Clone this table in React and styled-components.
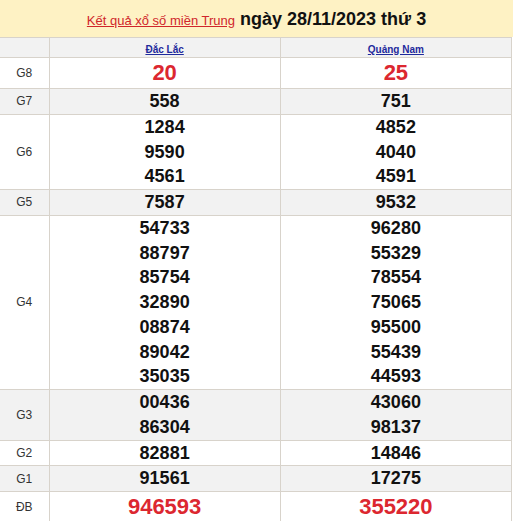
import React from "react";
import styled, { createGlobalStyle } from "styled-components";

const GlobalStyle = createGlobalStyle`
  body {
    margin: 0;
    background: #fff;
    font-family: "Liberation Sans", Arial, sans-serif;
  }
`;

const provinces = ["Đắc Lắc", "Quảng Nam"];

const prizes = [
  { label: "G8", big: true, values: [["20"], ["25"]] },
  { label: "G7", values: [["558"], ["751"]] },
  { label: "G6", values: [["1284", "9590", "4561"], ["4852", "4040", "4591"]] },
  { label: "G5", values: [["7587"], ["9532"]] },
  {
    label: "G4",
    values: [
      ["54733", "88797", "85754", "32890", "08874", "89042", "35035"],
      ["96280", "55329", "78554", "75065", "95500", "55439", "44593"],
    ],
  },
  { label: "G3", values: [["00436", "86304"], ["43060", "98137"]] },
  { label: "G2", values: [["82881"], ["14846"]] },
  { label: "G1", values: [["91561"], ["17275"]] },
  { label: "ĐB", big: true, values: [["946593"], ["355220"]] },
];

const ResultBox = () => {
  return (
    <Wrapper>
      <Title>
        <TitleLink href="#">Kết quả xổ số miền Trung</TitleLink>
        <TitleDate>ngày 28/11/2023 thứ 3</TitleDate>
      </Title>
      <Table>
        <colgroup>
          <col style={{ width: "49px" }} />
          <col />
          <col />
        </colgroup>
        <tbody>
          <Row $grey>
            <LabelCell />
            {provinces.map((p) => (
              <HeadCell key={p}>
                <ProvinceLink href="#">{p}</ProvinceLink>
              </HeadCell>
            ))}
          </Row>
          {prizes.map((prize, i) => (
            <Row key={prize.label} $grey={i % 2 === 1}>
              <LabelCell>{prize.label}</LabelCell>
              {prize.values.map((list, j) => (
                <NumberCell key={j}>
                  {list.map((n) => (
                    <Number key={n} $big={prize.big}>
                      {n}
                    </Number>
                  ))}
                </NumberCell>
              ))}
            </Row>
          ))}
        </tbody>
      </Table>
    </Wrapper>
  );
};

const Wrapper = styled.section`
  width: 513px;
`;

const Title = styled.div`
  height: 37px;
  background: #fef2c4;
  display: flex;
  justify-content: center;
  align-items: baseline;
  gap: 5px;
  line-height: 38px;
`;

const TitleLink = styled.a`
  color: #d0262b;
  font-size: 13px;
  text-decoration: underline;
`;

const TitleDate = styled.span`
  color: #111;
  font-size: 18px;
  font-weight: bold;
`;

const Table = styled.table`
  width: 512px;
  table-layout: fixed;
  border-collapse: collapse;
  font-family: "Liberation Sans", Arial, sans-serif;
`;

const Row = styled.tr`
  background: ${({ $grey }) => ($grey ? "#f2f2f2" : "#fff")};
  td {
    border: 1px solid #d8d3cb;
  }
  td:first-child {
    border-left: none;
  }
`;

const LabelCell = styled.td`
  padding: 0;
  text-align: center;
  vertical-align: middle;
  font-size: 12px;
  color: #333;
`;

const HeadCell = styled.td`
  padding: 0;
  height: 19px;
  text-align: center;
  vertical-align: middle;
`;

const ProvinceLink = styled.a`
  color: #1f2a9c;
  font-size: 10px;
  font-weight: bold;
  text-decoration: underline;
`;

const NumberCell = styled.td`
  padding: 0;
  text-align: center;
  vertical-align: middle;
`;

const Number = styled.div`
  font-weight: bold;
  font-size: ${({ $big }) => ($big ? "22px" : "18px")};
  line-height: ${({ $big }) => ($big ? "30px" : "24.75px")};
  color: ${({ $big }) => ($big ? "#dc2730" : "#111")};
`;

export default function App() {
  return (
    <>
      <GlobalStyle />
      <ResultBox />
    </>
  );
}
